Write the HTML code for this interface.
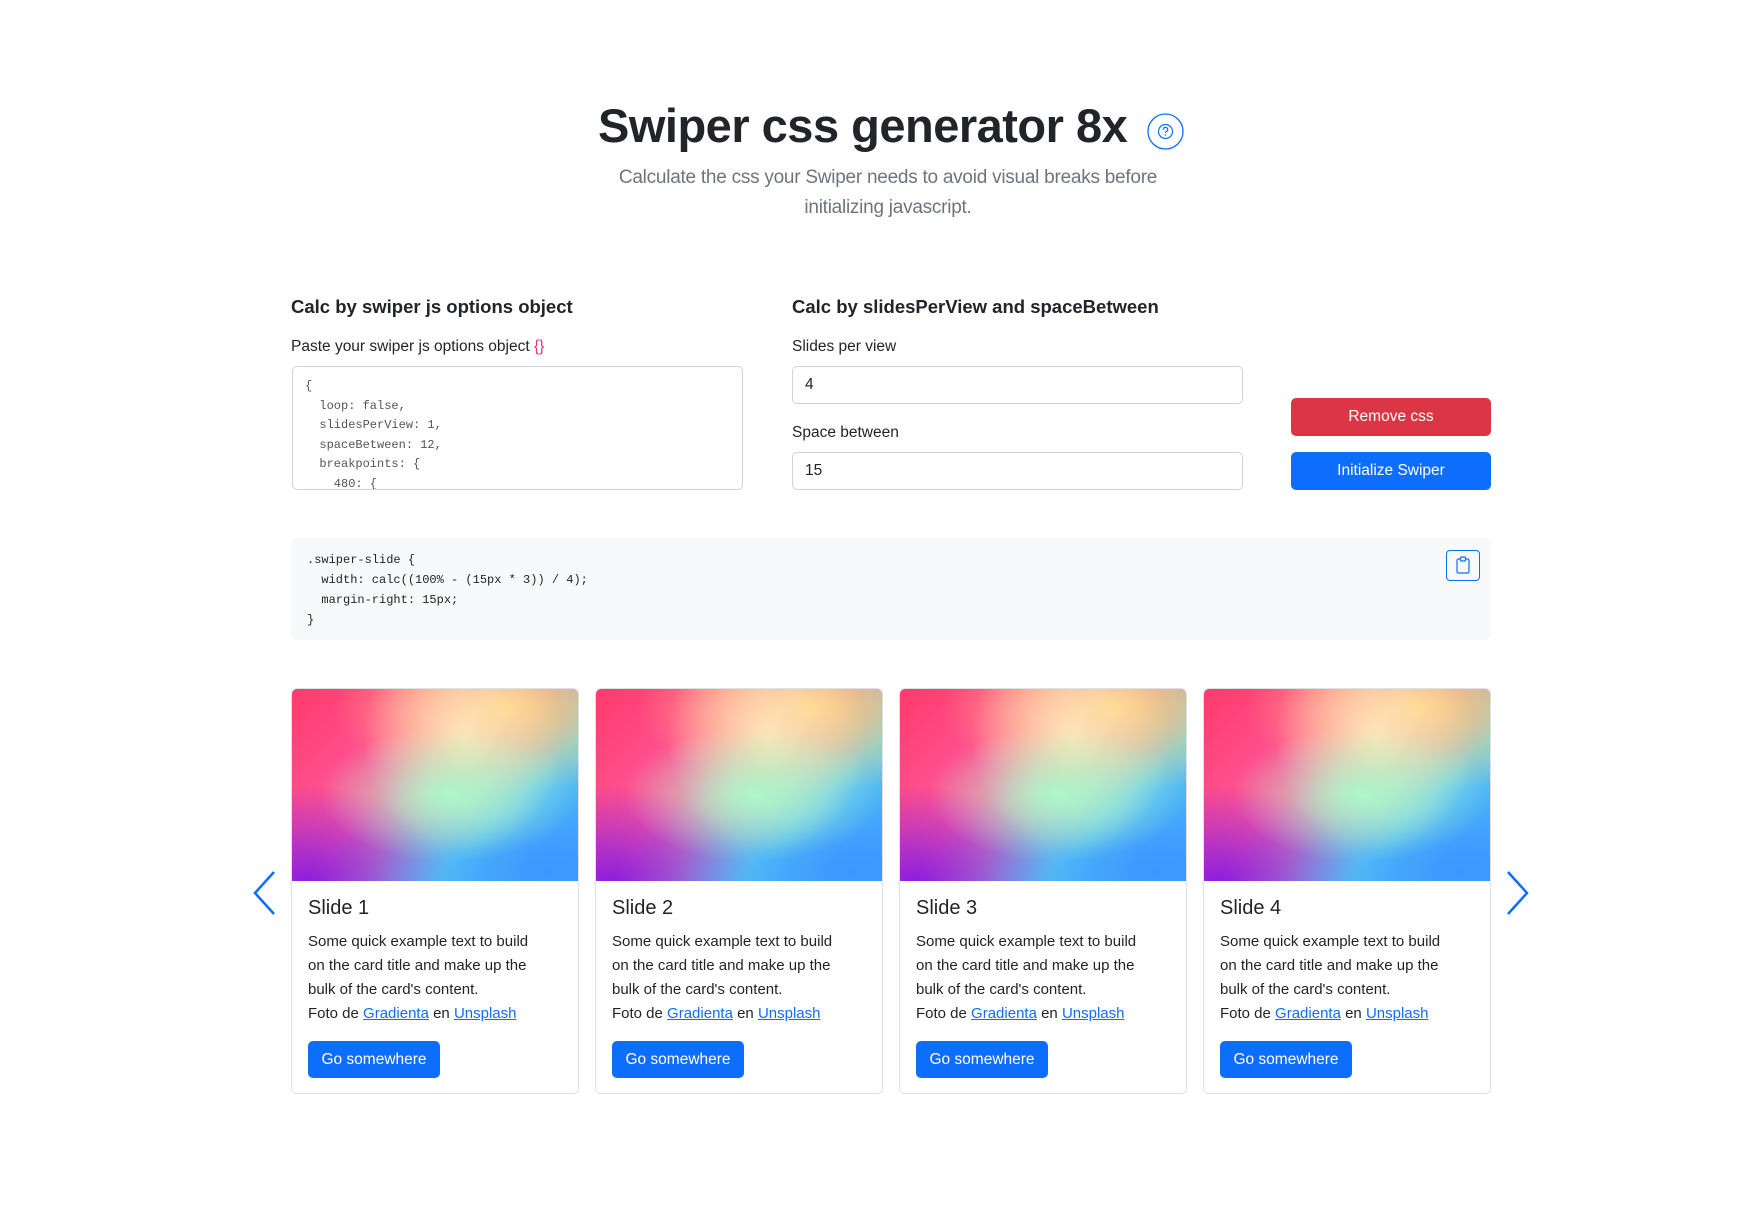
<!DOCTYPE html>
<html><head><meta charset="utf-8"><style>
*{box-sizing:border-box;margin:0;padding:0}
body{width:1764px;height:1207px;background:#fff;font-family:"Liberation Sans",sans-serif;color:#212529;position:relative;overflow:hidden}
.abs{position:absolute}
h1{position:absolute;left:598px;top:98px;font-size:47px;font-weight:bold;letter-spacing:-0.5px;white-space:nowrap;color:#212529}
.sub{position:absolute;left:0;width:1776px;text-align:center;font-size:19px;letter-spacing:-0.25px;color:#6c757d;font-weight:300;line-height:30px;top:163px}
h5{position:absolute;font-size:18.5px;font-weight:bold;color:#212529;white-space:nowrap}
.lbl{position:absolute;font-size:15.5px;color:#212529;white-space:nowrap}
.box{position:absolute;border:1px solid #ced4da;border-radius:5px;background:#fff}
.mono{font-family:"Liberation Mono",monospace;font-size:12px;color:#212529;line-height:19.5px;white-space:pre}
.btn{position:absolute;color:#fff;border-radius:5px;font-size:15.5px;text-align:center}
.card{position:absolute;top:688px;width:288px;height:406px;border:1px solid #dee2e6;border-radius:6px;overflow:hidden;background:#fff}
.img{height:192px;background:
radial-gradient(ellipse 45% 35% at 55% 55%,rgba(170,255,200,.9),rgba(170,255,200,0) 100%),
radial-gradient(ellipse 35% 60% at 60% 25%,rgba(255,235,190,.9),rgba(255,235,190,0) 100%),
radial-gradient(ellipse 60% 45% at 75% 10%,rgba(255,205,120,1),rgba(255,205,120,0) 100%),
radial-gradient(ellipse 60% 60% at 90% 95%,rgba(60,150,255,1),rgba(60,150,255,0) 100%),
radial-gradient(ellipse 50% 50% at 5% 100%,rgba(140,30,220,1),rgba(140,30,220,0) 100%),
linear-gradient(135deg,#ff3a6a 0%,#ff5aa0 40%,#60d0f0 70%,#40a8ff 100%)}
.card .t{position:absolute;left:16px;top:208px;font-size:20px;color:#212529}
.card p{position:absolute;left:16px;top:241px;width:235px;font-size:15px;line-height:24px;color:#212529}
.card a{color:#0d6efd;text-decoration:underline}
.card .btn{left:16px;top:352px;width:132px;height:37px;line-height:37px;background:#0d6efd}
</style></head><body>
<h1>Swiper css generator 8x</h1>
<svg class="abs" style="left:1147px;top:113px" width="37" height="37" viewBox="0 0 37 37"><circle cx="18.5" cy="18.5" r="17.5" fill="none" stroke="#0d6efd" stroke-width="1.3"/><circle cx="18.5" cy="18.5" r="7" fill="none" stroke="#0d6efd" stroke-width="1.2"/><path d="M16.3 16.6a2.2 2.2 0 1 1 3 2c-.6.3-.8.7-.8 1.3" fill="none" stroke="#0d6efd" stroke-width="1.2"/><circle cx="18.5" cy="22" r=".8" fill="#0d6efd"/></svg>
<div class="sub">Calculate the css your Swiper needs to avoid visual breaks before<br>initializing javascript.</div>

<h5 style="left:291px;top:296px">Calc by swiper js options object</h5>
<div class="lbl" style="left:291px;top:338px">Paste your swiper js options object <span style="color:#d63384">{}</span></div>
<div class="box" style="left:292px;top:366px;width:451px;height:124px;overflow:hidden;padding:10px 12px"><div class="mono" style="color:#555">{
  loop: false,
  slidesPerView: 1,
  spaceBetween: 12,
  breakpoints: {
    480: {</div></div>

<h5 style="left:792px;top:296px">Calc by slidesPerView and spaceBetween</h5>
<div class="lbl" style="left:792px;top:338px">Slides per view</div>
<div class="box" style="left:792px;top:366px;width:451px;height:38px;padding:0 12px;line-height:36px;font-size:15.5px">4</div>
<div class="lbl" style="left:792px;top:424px">Space between</div>
<div class="box" style="left:792px;top:452px;width:451px;height:38px;padding:0 12px;line-height:36px;font-size:15.5px">15</div>
<div class="btn" style="left:1291px;top:398px;width:200px;height:38px;line-height:38px;background:#dc3545">Remove css</div>
<div class="btn" style="left:1291px;top:452px;width:200px;height:38px;line-height:38px;background:#0d6efd">Initialize Swiper</div>

<div class="abs" style="left:291px;top:538px;width:1200px;height:102px;background:#f8f9fa;border-radius:5px"></div>
<div class="abs mono" style="left:307px;top:550px;line-height:20px">.swiper-slide {
  width: calc((100% - (15px * 3)) / 4);
  margin-right: 15px;
}</div>
<div class="abs" style="left:1446px;top:550px;width:34px;height:31px;border:1px solid #0d6efd;border-radius:4px"></div>
<svg class="abs" style="left:1456px;top:556px" width="14" height="18" viewBox="0 0 14 18"><rect x="1" y="3" width="12" height="14" rx="1.5" fill="none" stroke="#0d6efd" stroke-width="1.2"/><rect x="4.5" y="1" width="5" height="4" rx="1" fill="#f8f9fa" stroke="#0d6efd" stroke-width="1.2"/></svg>

<div class="card" style="left:291px"><div class="img"></div><div class="t">Slide 1</div><p>Some quick example text to build on the card title and make up the bulk of the card's content.<br>Foto de <a>Gradienta</a> en <a>Unsplash</a></p><div class="btn">Go somewhere</div></div>
<div class="card" style="left:595px"><div class="img"></div><div class="t">Slide 2</div><p>Some quick example text to build on the card title and make up the bulk of the card's content.<br>Foto de <a>Gradienta</a> en <a>Unsplash</a></p><div class="btn">Go somewhere</div></div>
<div class="card" style="left:899px"><div class="img"></div><div class="t">Slide 3</div><p>Some quick example text to build on the card title and make up the bulk of the card's content.<br>Foto de <a>Gradienta</a> en <a>Unsplash</a></p><div class="btn">Go somewhere</div></div>
<div class="card" style="left:1203px"><div class="img"></div><div class="t">Slide 4</div><p>Some quick example text to build on the card title and make up the bulk of the card's content.<br>Foto de <a>Gradienta</a> en <a>Unsplash</a></p><div class="btn">Go somewhere</div></div>

<svg class="abs" style="left:252px;top:870px" width="26" height="46" viewBox="0 0 26 46"><path d="M22 2 L3 23 L22 44" fill="none" stroke="#0d6efd" stroke-width="2.5"/></svg>
<svg class="abs" style="left:1504px;top:870px" width="26" height="46" viewBox="0 0 26 46"><path d="M4 2 L23 23 L4 44" fill="none" stroke="#0d6efd" stroke-width="2.5"/></svg>
</body></html>
